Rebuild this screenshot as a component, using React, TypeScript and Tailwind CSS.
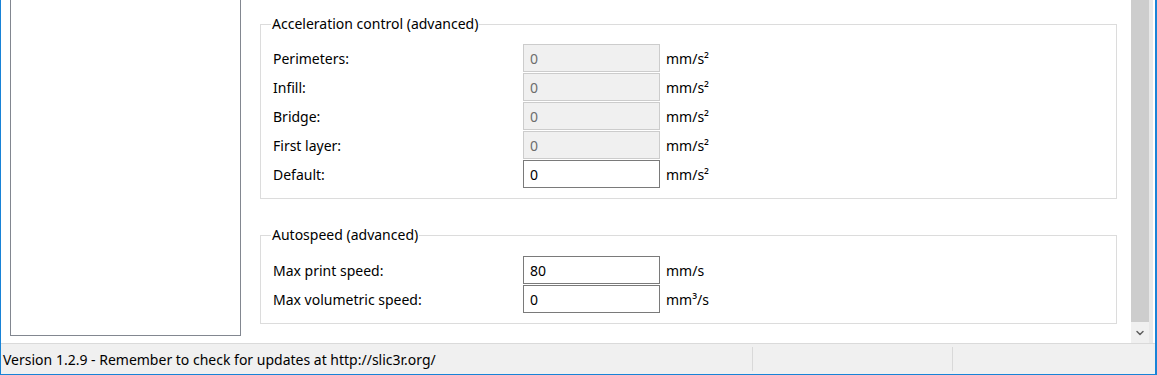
import { ChevronDown } from "lucide-react";

type Row = { label: string; value: string; unit: string; disabled?: boolean };

const accelRows: Row[] = [
  { label: "Perimeters:", value: "0", unit: "mm/s²", disabled: true },
  { label: "Infill:", value: "0", unit: "mm/s²", disabled: true },
  { label: "Bridge:", value: "0", unit: "mm/s²", disabled: true },
  { label: "First layer:", value: "0", unit: "mm/s²", disabled: true },
  { label: "Default:", value: "0", unit: "mm/s²" },
];

const autospeedRows: Row[] = [
  { label: "Max print speed:", value: "80", unit: "mm/s" },
  { label: "Max volumetric speed:", value: "0", unit: "mm³/s" },
];

function OptionGroup({ title, rows, className }: { title: string; rows: Row[]; className?: string }) {
  return (
    <fieldset className={`border border-[#dcdcdc] pl-[12px] ${className ?? ""}`}>
      <legend className="-ml-[2px] px-[1px] text-[14px] leading-[18px] text-black">{title}</legend>
      <div className="flex flex-col gap-[1px]">
        {rows.map((row) => (
          <div key={row.label} className="flex h-[28px] items-center">
            <span className="w-[250px] text-[14px] text-black">{row.label}</span>
            <div
              className={`flex h-[28px] w-[137px] items-center border px-[6px] text-[14px] ${
                row.disabled
                  ? "border-[#cccccc] bg-[#f0f0f0] text-[#6d6d6d]"
                  : "border-[#7a7a7a] bg-white text-black"
              }`}
            >
              {row.value}
            </div>
            <span className="ml-[6px] text-[14px] text-black">{row.unit}</span>
          </div>
        ))}
      </div>
    </fieldset>
  );
}

export default function App() {
  return (
    <div
      className="flex h-[375px] w-[1157px] flex-col overflow-hidden border-b border-l border-r-2 border-[#1883d7] bg-white"
      style={{ fontFamily: '"Segoe UI", "Noto Sans", sans-serif' }}
    >
      <div className="flex h-[343px] shrink-0">
        {/* preset list */}
        <div className="w-[240px] shrink-0 pl-[9px]">
          <div className="h-[336px] border-x border-b border-[#828790] bg-white" />
        </div>

        {/* options */}
        <div className="flex w-[890px] shrink-0 flex-col pl-[19px] pr-[14px] pt-[15px]">
          <OptionGroup title="Acceleration control (advanced)" rows={accelRows} className="pb-[10px] pt-[11px]" />
          <OptionGroup title="Autospeed (advanced)" rows={autospeedRows} className="mt-[27px] pb-[10px] pt-[12px]" />
        </div>

        {/* scrollbar */}
        <div className="flex w-[18px] shrink-0 flex-col">
          <div className="flex-1 bg-[#cdcdcd]" />
          <div className="flex h-[21px] items-center justify-center bg-[#f0f0f0]">
            <ChevronDown size={12} strokeWidth={3} color="#606060" />
          </div>
        </div>
        <div className="w-[4px] shrink-0 bg-[#e8e8e8]" />
        <div className="flex-1 bg-white" />
      </div>

      <div className="h-px shrink-0 bg-[#dadada]" />

      {/* status bar */}
      <div className="flex flex-1 bg-[#f0f0f0] text-[14px] text-black">
        <div className="flex w-[751px] items-center pl-[2px] pt-[1px]">
          Version 1.2.9 - Remember to check for updates at http://slic3r.org/
        </div>
        <div className="my-[3px] w-px bg-[#d9d9d9]" />
        <div className="w-[199px]" />
        <div className="my-[3px] w-px bg-[#d9d9d9]" />
        <div className="flex-1" />
      </div>
    </div>
  );
}
